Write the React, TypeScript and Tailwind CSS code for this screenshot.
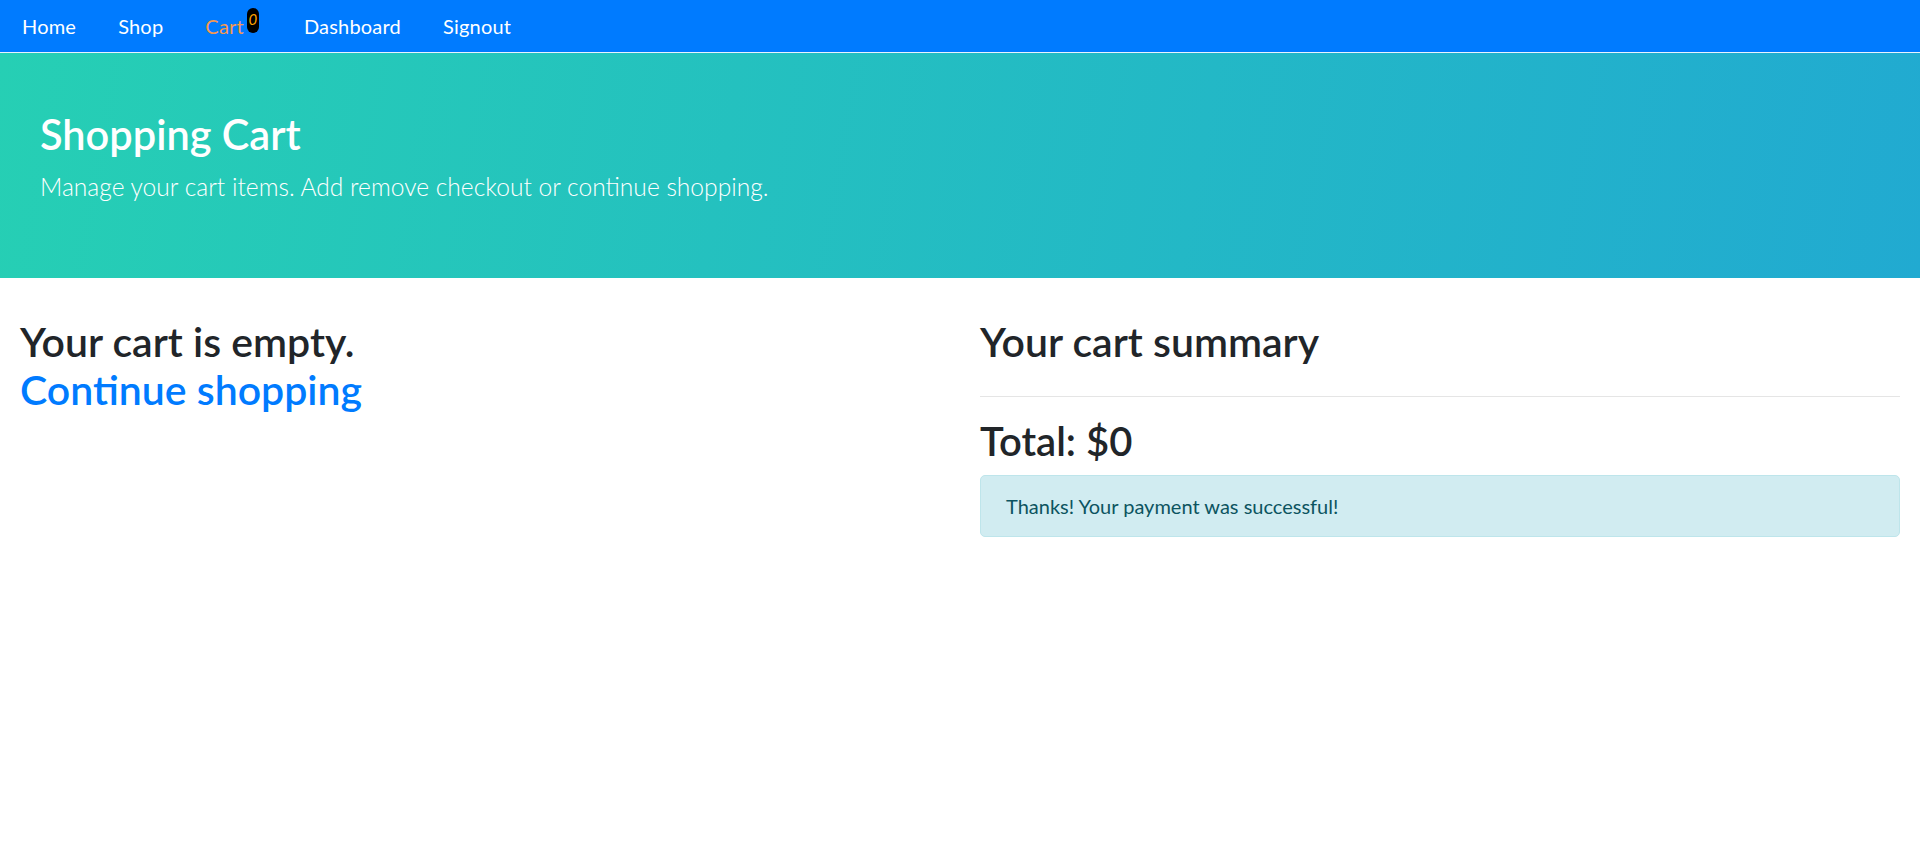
const links = [
  { label: "Home" },
  { label: "Shop" },
  { label: "Cart", active: true, badge: 0 },
  { label: "Dashboard" },
  { label: "Signout" },
]

const App = () => {
  return (
    <div className="min-h-screen bg-white font-['Lato','Liberation_Sans',sans-serif] text-[#212529]">
      <nav className="h-[53px] bg-[#007bff] border-b border-[#e9f2ff] flex items-start pl-[1px]">
        {links.map((l) => (
          <a
            key={l.label}
            href="#"
            className={`flex items-start px-[21px] pt-[11px] text-[20px] leading-[30px] ${l.active ? "text-[#f7994f]" : "text-white"}`}
          >
            <span className="tracking-[0.2px]">{l.label}</span>
            {l.badge !== undefined && (
              <span className="ml-[3px] mr-[3px] -mt-[3px] w-[12px] h-[25px] rounded-full bg-black text-[#ffa500] italic text-[15px] flex items-start justify-center pt-[2px]">
                <span className="leading-[18px]">{l.badge}</span>
              </span>
            )}
          </a>
        ))}
      </nav>

      <div className="bg-[linear-gradient(100deg,#26cfb4_0%,#21aad1_100%)] px-10 pt-[57px] pb-[52px] mb-10 text-white">
        <h2 className="text-[41.5px] leading-[48px] font-semibold mb-[10px]">Shopping Cart</h2>
        <p className="text-[24.6px] leading-[37.5px] font-light mb-5">
          Manage your cart items. Add remove checkout or continue shopping.
        </p>
      </div>

      <div className="grid grid-cols-2">
        <div className="px-5">
          <h2 className="text-[41px] leading-[48px] font-semibold">
            Your cart is empty.
            <br />
            <a href="#" className="text-[#007bff]">Continue shopping</a>
          </h2>
        </div>
        <div className="px-5 flex flex-col">
          <h2 className="text-[41px] leading-[48px] font-semibold mb-[10px]">Your cart summary</h2>
          <hr className="mt-5 mb-5 border-t border-[#e5e5e5]" />
          <h2 className="text-[40px] leading-[48px] font-semibold mb-[10px]">Total: $0</h2>
          <div className="border border-[#bee5eb] bg-[#d1ecf1] text-[#0c5460] rounded-[5px] px-[25px] py-[15px] text-[20px] leading-[30px]">
            Thanks! Your payment was successful!
          </div>
        </div>
      </div>
    </div>
  )
}

export default App
